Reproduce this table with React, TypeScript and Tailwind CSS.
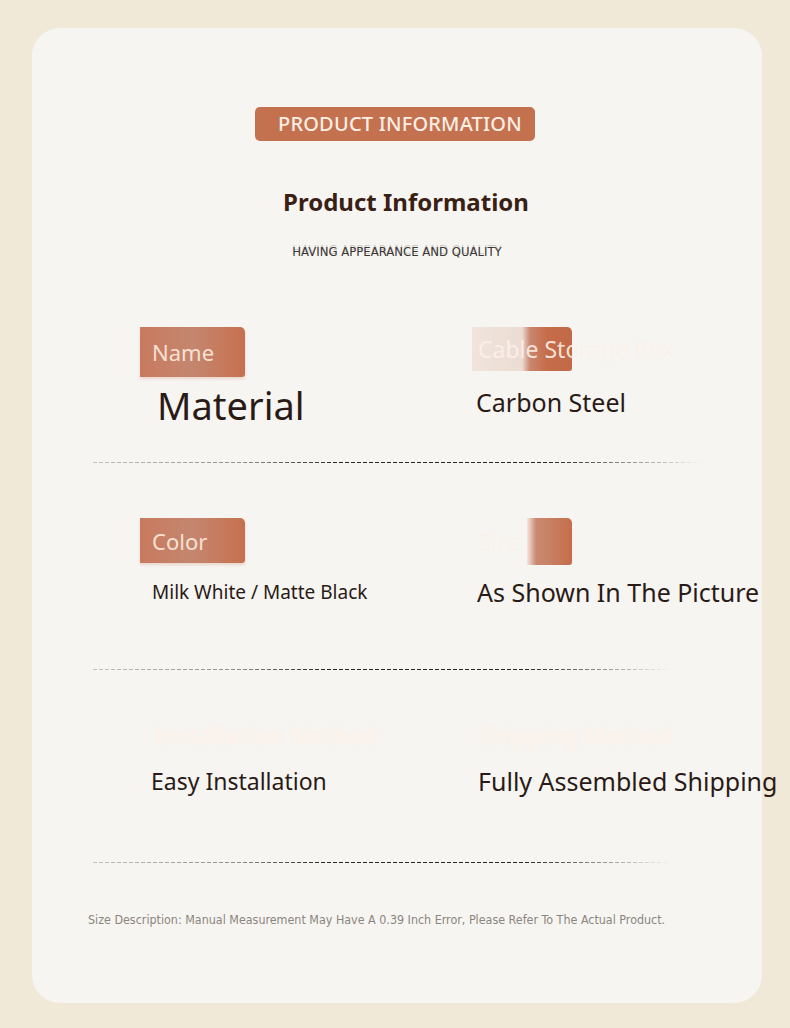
import React from "react";

const sans = "font-['Noto_Sans','Open_Sans',sans-serif]";
const narrow = "font-['DejaVu_Sans_Condensed','Liberation_Sans',sans-serif]";

const Divider = ({ width }: { width: string }) => (
  <div
    className={`ml-[61px] h-px ${width} bg-[repeating-linear-gradient(90deg,#2c2622_0_4px,transparent_4px_6px)] [mask-image:linear-gradient(90deg,rgba(0,0,0,0.25),rgba(0,0,0,0.5)_25%,black_40%,black_75%,transparent)]`}
  />
);

const SolidTag = ({ label }: { label: string }) => (
  <div className="relative h-full w-[105px] rounded-tr-[5px] rounded-br-[3px] bg-gradient-to-r from-[#c97a5f] via-[#c4866f] to-[#c6704d] shadow-[0_2px_3px_rgba(200,120,90,0.25)]">
    <span className={`${sans} absolute left-[12px] top-1/2 -translate-y-1/2 text-[22px] leading-none text-[#f8e0d2]`}>
      {label}
    </span>
  </div>
);

const FadedTag = ({ label, light }: { label: string; light?: boolean }) => (
  <div className="relative h-full">
    {light ? (
      <div className="absolute left-0 top-0 h-full w-[100px] rounded-tr-[5px] rounded-br-[3px] bg-[linear-gradient(90deg,#f0e4dd_0%,#ecdcd3_50%,#c98670_58%,#c56d4a_75%,#c26a48_100%)]" />
    ) : (
      <div className="absolute left-[55px] top-0 h-full w-[45px] rounded-tr-[5px] rounded-br-[3px] bg-gradient-to-r from-[#f2e6df] via-[#c98a72] via-20% to-[#c56d4a]" />
    )}
    <span className={`${sans} absolute left-[6px] top-1/2 -translate-y-1/2 whitespace-nowrap text-[23px] leading-none text-[#fcf1ea]/90`}>
      {label}
    </span>
  </div>
);

const GhostLabel = ({ label }: { label: string }) => (
  <div className="flex h-[40px] items-center">
    <span className={`${sans} whitespace-nowrap text-[23px] font-semibold text-[#fbf2eb] [text-shadow:0_0_4px_rgba(250,240,230,0.6)]`}>
      {label}
    </span>
  </div>
);

export default function App() {
  return (
    <div className="min-h-[1028px] w-[790px] bg-[#f1e9d8] pl-[32px] pt-[28px]">
      <div className="flex h-[975px] w-[730px] flex-col rounded-[28px] bg-[#f7f5f2] pt-[79px]">
        {/* header */}
        <div className="flex justify-center pr-[4px]">
          <div className={`${sans} flex h-[34px] w-[280px] items-center rounded-[5px] bg-[#c4714f] pl-[23px] text-[20px] font-medium tracking-[0.2px] text-[#fbeee4]`}>
            PRODUCT INFORMATION
          </div>
        </div>
        <div className={`${sans} mt-[45px] pl-[18px] text-center text-[24px] font-bold leading-[32px] text-[#3a1f15]`}>
          Product Information
        </div>
        <div className={`${narrow} mt-[26px] text-center text-[13px] leading-[16px] text-[#3b3633] [text-shadow:0_-2px_0_rgba(80,70,65,0.25)]`}>
          HAVING APPEARANCE AND QUALITY
        </div>

        {/* row 1 */}
        <div className="mt-[67px] grid h-[135px] grid-cols-[332px_1fr] pl-[108px]">
          <div className="flex flex-col">
            <div className="h-[50px]">
              <SolidTag label="Name" />
            </div>
            <div className={`${sans} mt-[5px] pl-[17px] text-[38px] leading-[46px] text-[#2a1a16]`}>Material</div>
          </div>
          <div className="flex flex-col">
            <div className="h-[44px]">
              <FadedTag label="Cable Storage Box" light />
            </div>
            <div className={`${sans} mt-[15px] pl-[4px] text-[25px] leading-[32px] text-[#2a1a16]`}>Carbon Steel</div>
          </div>
        </div>
        <Divider width="w-[610px]" />

        {/* row 2 */}
        <div className="grid h-[206px] grid-cols-[332px_1fr] pl-[108px] pt-[55px]">
          <div className="flex flex-col">
            <div className="h-[45px]">
              <SolidTag label="Color" />
            </div>
            <div className={`${sans} mt-[15px] pl-[12px] text-[19px] leading-[28px] text-[#2a1a16]`}>
              Milk White / Matte Black
            </div>
          </div>
          <div className="flex flex-col">
            <div className="h-[47px]">
              <FadedTag label="Size" />
            </div>
            <div className={`${sans} mt-[10px] whitespace-nowrap pl-[5px] text-[25px] leading-[34px] text-[#2a1a16]`}>
              As Shown In The Picture
            </div>
          </div>
        </div>
        <Divider width="w-[577px]" />

        {/* row 3 */}
        <div className="grid h-[192px] grid-cols-[332px_1fr] pl-[108px] pt-[45px]">
          <div className="flex flex-col">
            <div className="pl-[15px]">
              <GhostLabel label="Installation Method" />
            </div>
            <div className={`${sans} mt-[9px] pl-[11px] text-[23px] leading-[34px] text-[#2a1a16]`}>
              Easy Installation
            </div>
          </div>
          <div className="flex flex-col">
            <div className="pl-[8px]">
              <GhostLabel label="Shipping Method" />
            </div>
            <div className={`${sans} mt-[9px] whitespace-nowrap pl-[6px] text-[25px] leading-[34px] text-[#2a1a16]`}>
              Fully Assembled Shipping
            </div>
          </div>
        </div>
        <Divider width="w-[577px]" />

        {/* footer */}
        <div className={`${narrow} mt-[48px] pl-[56px] text-[12.4px] leading-[18px] text-[#8b8580]`}>
          Size Description: Manual Measurement May Have A 0.39 Inch Error, Please Refer To The Actual Product.
        </div>
      </div>
    </div>
  );
}
